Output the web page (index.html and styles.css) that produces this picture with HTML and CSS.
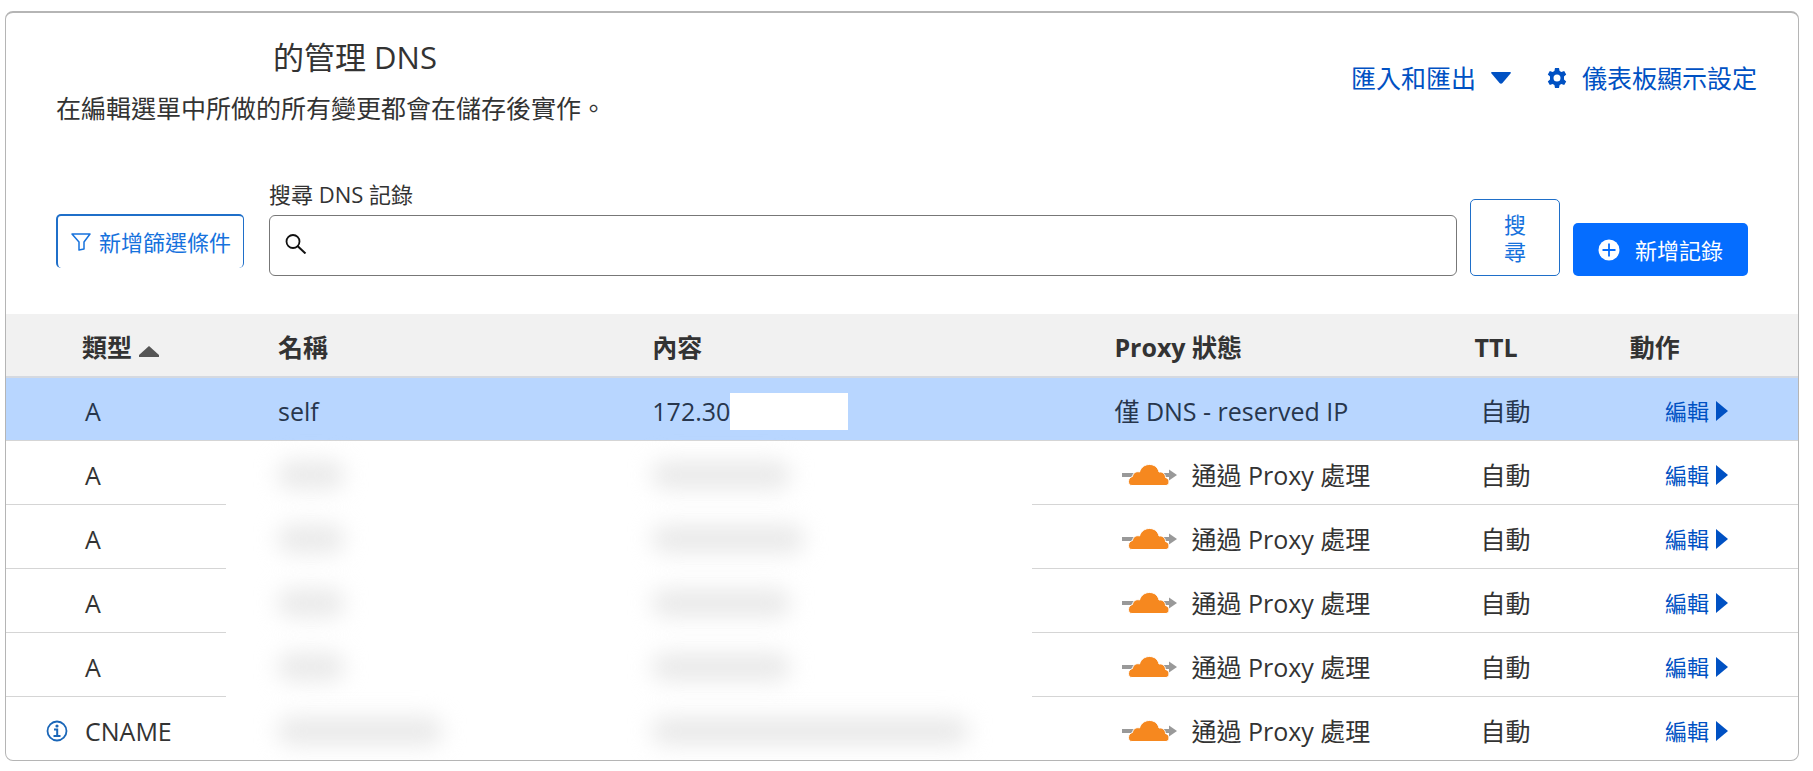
FILE: index.html
```html
<!DOCTYPE html>
<html lang="zh-Hant">
<head>
  <meta charset="UTF-8" />
  <meta name="viewport" content="width=device-width, initial-scale=1.0"/>
  <title>管理 DNS</title>
  <link rel="stylesheet" href="styles.css">
</head>
<body>
  <svg class="sprite" aria-hidden="true">
    <symbol id="cloud" viewBox="0 0 56 22">
      <path fill="#999" d="M0 9h47V5.500l8 5.500-8 5.500V13H0z"/>
      <path fill="#f6881f" stroke="#fff" stroke-width="1" d="M10 21.500C7 21.500 6.500 19.500 6.500 17.500c0-3 2-4.500 4-5 .5-4 4-5.500 7-4.500C19 3 23 .5 27.500 .5c5 0 8.500 3 9.500 7.500 4-.5 6.500 2.500 6.500 5.500 2.500.5 3.500 2.500 3.500 4.500 0 2-1.500 3.500-3 3.500z"/>
    </symbol>
    <symbol id="right" viewBox="0 0 12 20">
      <path fill="currentColor" d="M0 0l12 10L0 20z"/>
    </symbol>
  </svg>

  <main class="panel">
    <header class="head">
      <div>
        <h1><span class="domain"></span>的管理 DNS</h1>
        <p>在編輯選單中所做的所有變更都會在儲存後實作。</p>
      </div>
      <div class="links">
        <button class="link-btn">匯入和匯出
          <svg class="caret" viewBox="0 0 20 12"><path fill="currentColor" d="M1 0h18q1.500 0 .5 1.500L11.500 11q-1.500 1.500-3 0L.5 1.500Q-.5 0 1 0z"/></svg>
        </button>
        <button class="link-btn">
          <svg class="gear" viewBox="0 0 20 20"><path fill="currentColor" fill-rule="evenodd" d="M8 0h4l.6 2.900 1.800 1 2.800-.9 2 3.400-2.200 2v3.200l2.200 2-2 3.400-2.800-.9-1.800 1L12 20H8l-.6-2.900-1.800-1-2.800.9-2-3.400 2.200-2V8.400l-2.200-2 2-3.400 2.800.9 1.800-1zM10 6.500a3.500 3.500 0 1 0 0 7 3.500 3.500 0 0 0 0-7z"/></svg>
          儀表板顯示設定</button>
      </div>
    </header>

    <form class="toolbar">
      <button type="button" class="btn filter">
        <svg viewBox="0 0 20 18"><path fill="none" stroke="currentColor" stroke-width="1.500" stroke-linejoin="round" d="M1 1h18l-6 8v7l-5 1V9z"/></svg>
        新增篩選條件</button>
      <div class="search">
        <label for="q">搜尋 DNS 記錄</label>
        <div class="search-box">
          <svg viewBox="0 0 22 20"><circle cx="8" cy="7.500" r="6.500" fill="none" stroke="currentColor" stroke-width="1.800"/><path stroke="currentColor" stroke-width="2" d="M12.500 12l8 7.500"/></svg>
          <input type="text" id="q">
        </div>
      </div>
      <button type="button" class="btn find">搜尋</button>
      <button type="button" class="btn add">
        <svg viewBox="0 0 22 22"><circle cx="11" cy="11" r="10.500" fill="#fff"/><path stroke="#056dff" stroke-width="1.800" d="M11 4.500v13M4.500 11h13"/></svg>
        新增記錄</button>
    </form>

    <table>
      <colgroup>
        <col class="c-type"><col class="c-name"><col class="c-content"><col class="c-proxy"><col class="c-ttl"><col class="c-action">
      </colgroup>
      <thead>
        <tr>
          <th class="type">類型 <svg class="sort" viewBox="0 0 20 11"><path fill="#555" d="M10 0l10 9v2H0V9z"/></svg></th>
          <th class="name">名稱</th>
          <th class="content">內容</th>
          <th class="proxy">Proxy 狀態</th>
          <th class="ttl">TTL</th>
          <th class="action">動作</th>
        </tr>
      </thead>
      <tbody>
        <tr class="selected">
          <td class="type">A</td>
          <td class="name">self</td>
          <td class="content"><span class="ip">172.30<span class="mask"></span></span></td>
          <td class="proxy">僅 DNS - reserved IP</td>
          <td class="ttl">自動</td>
          <td class="action"><a href="#">編輯<svg><use href="#right"/></svg></a></td>
        </tr>
        <tr>
          <td class="type">A</td>
          <td class="name hidden"><span class="smudge w-s"></span></td>
          <td class="content hidden"><span class="smudge w-m"></span></td>
          <td class="proxy"><span class="proxied"><svg><use href="#cloud"/></svg>通過 Proxy 處理</span></td>
          <td class="ttl">自動</td>
          <td class="action"><a href="#">編輯<svg><use href="#right"/></svg></a></td>
        </tr>
        <tr>
          <td class="type">A</td>
          <td class="name hidden"><span class="smudge w-s"></span></td>
          <td class="content hidden"><span class="smudge w-l"></span></td>
          <td class="proxy"><span class="proxied"><svg><use href="#cloud"/></svg>通過 Proxy 處理</span></td>
          <td class="ttl">自動</td>
          <td class="action"><a href="#">編輯<svg><use href="#right"/></svg></a></td>
        </tr>
        <tr>
          <td class="type">A</td>
          <td class="name hidden"><span class="smudge w-s"></span></td>
          <td class="content hidden"><span class="smudge w-m"></span></td>
          <td class="proxy"><span class="proxied"><svg><use href="#cloud"/></svg>通過 Proxy 處理</span></td>
          <td class="ttl">自動</td>
          <td class="action"><a href="#">編輯<svg><use href="#right"/></svg></a></td>
        </tr>
        <tr>
          <td class="type">A</td>
          <td class="name hidden"><span class="smudge w-s"></span></td>
          <td class="content hidden"><span class="smudge w-m"></span></td>
          <td class="proxy"><span class="proxied"><svg><use href="#cloud"/></svg>通過 Proxy 處理</span></td>
          <td class="ttl">自動</td>
          <td class="action"><a href="#">編輯<svg><use href="#right"/></svg></a></td>
        </tr>
        <tr>
          <td class="type with-info"><span class="info-type"><svg viewBox="0 0 22 22"><circle cx="11" cy="11" r="9.500" fill="none" stroke="currentColor" stroke-width="1.800"/><circle cx="11" cy="6" r="1.600" fill="currentColor"/><path fill="none" stroke="currentColor" stroke-width="2" d="M8 9.500h3.200V16M7.500 16h7"/></svg>CNAME</span></td>
          <td class="name hidden"><span class="smudge w-name"></span></td>
          <td class="content hidden"><span class="smudge w-xl"></span></td>
          <td class="proxy"><span class="proxied"><svg><use href="#cloud"/></svg>通過 Proxy 處理</span></td>
          <td class="ttl">自動</td>
          <td class="action"><a href="#">編輯<svg><use href="#right"/></svg></a></td>
        </tr>
      </tbody>
    </table>
  </main>
</body>
</html>
```

FILE: styles.css
```css
* {
  box-sizing: border-box;
}
body {
  margin: 11px 14px 10px 5px;
  background: #fff;
  color: #333;
  font-family: "Open Sans", "Noto Sans CJK TC", sans-serif;
  font-size: 25px;
  line-height: 34px;
}
button, input {
  font: inherit;
}
button {
  cursor: pointer;
}
svg {
  flex: none;
}
.sprite {
  display: none;
}
.panel {
  border: 1px solid #b5b5b5;
  border-top-width: 2px;
  border-radius: 8px;
  overflow: hidden;
}

/* title and links */
.head {
  display: flex;
  justify-content: space-between;
  padding: 24px 41px 0 50px;
}
h1 {
  margin: 0;
  font-size: 31px;
  font-weight: 400;
  line-height: 40px;
}
.domain {
  display: inline-block;
  width: 217px;
}
.head p {
  margin: 14px 0 0;
}
.links {
  display: flex;
  align-items: flex-start;
  gap: 36px;
  padding-top: 24px;
}
.link-btn {
  display: flex;
  align-items: center;
  gap: 15px;
  padding: 0;
  border: none;
  background: none;
  color: #0051c3;
}
.caret {
  width: 20px;
  height: 12px;
}
.gear {
  width: 20px;
  height: 20px;
}

/* search bar */
.toolbar {
  display: flex;
  align-items: flex-end;
  gap: 13px;
  padding: 52px 50px 38px;
  font-size: 22px;
}
.btn {
  display: flex;
  align-items: center;
  justify-content: center;
  border: 1px solid #1f6fc9;
  border-radius: 5px;
  background: #fff;
  color: #1672dd;
  white-space: nowrap;
}
.filter {
  gap: 8px;
  height: 54px;
  margin: 0 12px 8px 0;
  padding: 0 12px 0 13px;
  border-width: 2px 1px 0 2px;
}
.filter svg {
  width: 20px;
  height: 18px;
}
.search {
  flex: 1;
}
.search label {
  display: block;
  margin-bottom: 4px;
}
.search-box {
  display: flex;
  align-items: center;
  height: 61px;
  padding: 0 15px 4px;
  border: 1px solid #777;
  border-radius: 6px;
  color: #111;
}
.search-box svg {
  width: 22px;
  height: 20px;
}
.search-box input {
  flex: 1;
  margin-left: 10px;
  border: none;
  outline: none;
  background: none;
}
.find {
  width: 90px;
  height: 77px;
  padding: 0 32px;
  line-height: 27px;
  white-space: normal;
}
.add {
  gap: 15px;
  height: 53px;
  padding: 0 25px;
  border: none;
  background: #056dff;
  color: #fff;
}
.add svg {
  width: 22px;
  height: 22px;
}

/* records */
table {
  width: 100%;
  border-collapse: separate;
  border-spacing: 0;
  table-layout: fixed;
}
.c-type { width: 220px; }
.c-name { width: 21%; }
.c-content { width: 24%; }
.c-proxy { width: 24%; }
.c-ttl { width: 9%; }
th, td {
  height: 64px;
  padding: 4px 0 0;
  border-bottom: 1px solid #d5d5d5;
  text-align: left;
  white-space: nowrap;
}
th {
  background: #f1f1f1;
  border-bottom: 2px solid #d5d9e0;
  font-weight: 700;
}
.type { padding-left: 76px; }
td.type { padding-left: 79px; }
.name { padding-left: 52px; }
.content { padding-left: 50px; }
.proxy { padding-left: 82px; }
.ttl { padding-left: 12px; }
td.ttl { padding-left: 18px; }
th.action { padding-left: 6px; }
.sort {
  width: 20px;
  height: 11px;
}
.selected td {
  height: 63px;
  background: #b8d6ff;
  color: #27364d;
}
tr:last-child td {
  border-bottom: none;
}
tbody tr:last-child td {
  height: 63px;
}
td.hidden {
  border-bottom-color: transparent;
}
.ip, .proxied, .info-type, .action a {
  display: flex;
  align-items: center;
}
.mask {
  width: 118px;
  height: 37px;
  background: #fff;
}
.smudge {
  display: block;
  height: 28px;
  border-radius: 12px;
  background: #e9e9e9;
  filter: blur(11px);
}
.w-s { width: 66px; }
.w-m { width: 138px; }
.w-l { width: 152px; }
.w-name { width: 164px; }
.w-xl { width: 316px; }
.proxied {
  gap: 13px;
  padding-left: 8px;
}
.proxied svg {
  width: 56px;
  height: 22px;
}
td.with-info {
  padding-left: 40px;
}
.info-type {
  gap: 17px;
}
.info-type svg {
  width: 22px;
  height: 22px;
  color: #1a66b8;
}
td.action {
  padding-right: 70px;
  font-size: 22px;
}
.action a {
  justify-content: flex-end;
  gap: 7px;
  color: #0051c3;
  text-decoration: none;
}
.action svg {
  width: 12px;
  height: 20px;
}
```
